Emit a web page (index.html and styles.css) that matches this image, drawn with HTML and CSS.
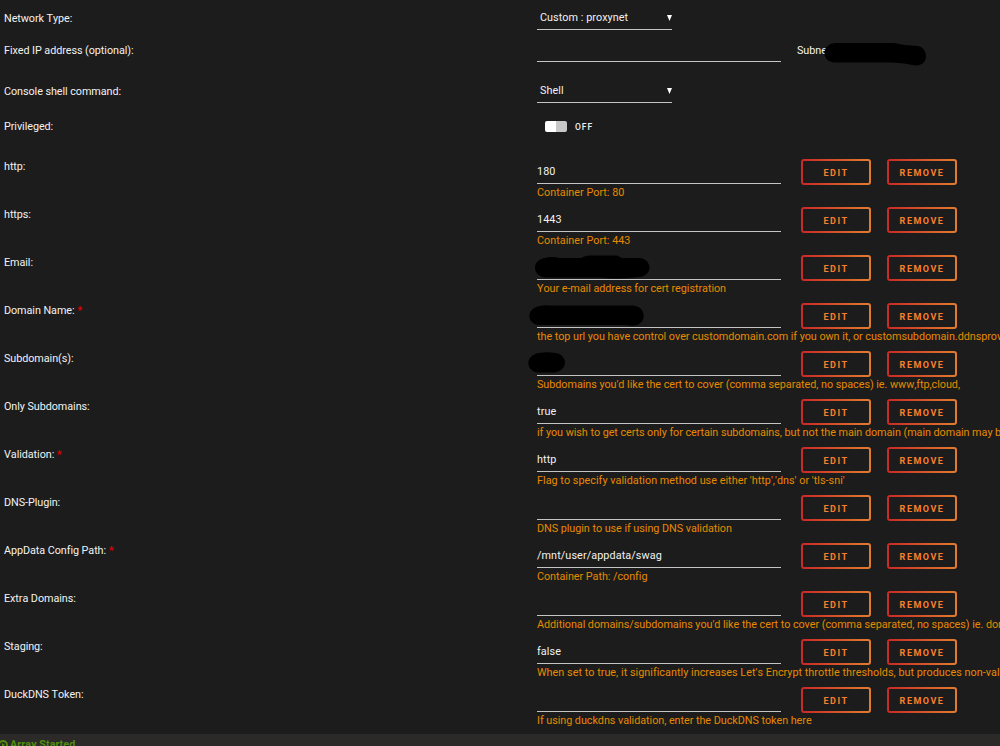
FILE: index.html
```html
<!DOCTYPE html>
<html lang="en">

<head>
  <meta charset="UTF-8">
  <meta name="viewport" content="width=device-width, initial-scale=1.0">
  <title>Update Container</title>
  <link rel="stylesheet" href="styles.css">
</head>

<body>
  <main class="settings">
    <div class="row row-network">
      <div class="label">Network Type:</div>
      <div class="select"><span>Custom : proxynet</span><svg class="arrow" viewBox="0 0 5 6"><path d="M0 0h5L2.5 6z" /></svg></div>
    </div>
    <div class="row row-ip">
      <div class="label">Fixed IP address (optional):</div>
      <div class="input"></div>
      <div class="subnet">Subnet:
        <svg class="mark mark-subnet" viewBox="0 0 104 24"><path d="M11 1H70Q82 4 94 4C105 6 105 24 92 23.500Q80 21 68 20.500H11C-3 20-3 2 11 1z" /></svg>
      </div>
    </div>
    <div class="row row-console">
      <div class="label">Console shell command:</div>
      <div class="select"><span>Shell</span><svg class="arrow" viewBox="0 0 5 6"><path d="M0 0h5L2.5 6z" /></svg></div>
    </div>
    <div class="row row-privileged">
      <div class="label">Privileged:</div>
      <div class="toggle"><span class="switch"></span><span class="off">OFF</span></div>
    </div>

    <div class="row param">
      <div class="label">http:</div>
      <div class="input">180</div>
      <div class="buttons"><button>Edit</button><button>Remove</button></div>
      <div class="help wide"><span>Container Port: 80</span></div>
    </div>
    <div class="row param">
      <div class="label">https:</div>
      <div class="input">1443</div>
      <div class="buttons"><button>Edit</button><button>Remove</button></div>
      <div class="help wide"><span>Container Port: 443</span></div>
    </div>
    <div class="row param">
      <div class="label">Email:</div>
      <div class="input">
        <svg class="mark mark-email" viewBox="0 0 115 24"><path d="M10 3Q17 1 24 3H46Q51 0 55 .5H82L87 3H104C118 4 118 21 104 22Q85 24.500 65 22.500H11C-3 22-4 5 10 3z" /></svg>
      </div>
      <div class="buttons"><button>Edit</button><button>Remove</button></div>
      <div class="help"><span>Your e-mail address for cert registration</span></div>
    </div>
    <div class="row param">
      <div class="label">Domain Name: <b>*</b></div>
      <div class="input">
        <svg class="mark mark-domain" viewBox="0 0 115 21"><path d="M11 1Q16-.2 20 .5H104C118 2 118 18 106 20.500Q102 21 98 20H10C-3 19-3 3 11 1z" /></svg>
      </div>
      <div class="buttons"><button>Edit</button><button>Remove</button></div>
      <div class="help"><span>the top url you have control over customdomain.com if you own it, or customsubdomain.ddnsprov</span></div>
    </div>
    <div class="row param">
      <div class="label">Subdomain(s):</div>
      <div class="input">
        <svg class="mark mark-subdomain" viewBox="0 0 37 21"><path d="M11 1Q18-.3 26 .7C40 2 41 18 27 20.500H10C-3 19-3 3 11 1z" /></svg>
      </div>
      <div class="buttons"><button>Edit</button><button>Remove</button></div>
      <div class="help"><span>Subdomains you'd like the cert to cover (comma separated, no spaces) ie. www,ftp,cloud,</span></div>
    </div>
    <div class="row param">
      <div class="label">Only Subdomains:</div>
      <div class="input">true</div>
      <div class="buttons"><button>Edit</button><button>Remove</button></div>
      <div class="help"><span>if you wish to get certs only for certain subdomains, but not the main domain (main domain may b</span></div>
    </div>
    <div class="row param">
      <div class="label">Validation: <b>*</b></div>
      <div class="input">http</div>
      <div class="buttons"><button>Edit</button><button>Remove</button></div>
      <div class="help wide"><span>Flag to specify validation method use either 'http','dns' or 'tls-sni'</span></div>
    </div>
    <div class="row param">
      <div class="label">DNS-Plugin:</div>
      <div class="input"></div>
      <div class="buttons"><button>Edit</button><button>Remove</button></div>
      <div class="help"><span>DNS plugin to use if using DNS validation</span></div>
    </div>
    <div class="row param">
      <div class="label">AppData Config Path: <b>*</b></div>
      <div class="input">/mnt/user/appdata/swag</div>
      <div class="buttons"><button>Edit</button><button>Remove</button></div>
      <div class="help"><span>Container Path: /config</span></div>
    </div>
    <div class="row param">
      <div class="label">Extra Domains:</div>
      <div class="input"></div>
      <div class="buttons"><button>Edit</button><button>Remove</button></div>
      <div class="help"><span>Additional domains/subdomains you'd like the cert to cover (comma separated, no spaces) ie. dor</span></div>
    </div>
    <div class="row param">
      <div class="label">Staging:</div>
      <div class="input">false</div>
      <div class="buttons"><button>Edit</button><button>Remove</button></div>
      <div class="help wide"><span>When set to true, it significantly increases Let's Encrypt throttle thresholds, but produces non-val</span></div>
    </div>
    <div class="row param">
      <div class="label">DuckDNS Token:</div>
      <div class="input"></div>
      <div class="buttons"><button>Edit</button><button>Remove</button></div>
      <div class="help"><span>If using duckdns validation, enter the DuckDNS token here</span></div>
    </div>
  </main>

  <footer>
    <svg class="play" viewBox="0 0 10 10"><circle cx="5" cy="5" r="4" /><path d="M4 3l3 2-3 2z" /></svg>
    <span>Array Started</span>
  </footer>
</body>

</html>
```

FILE: styles.css
```css
body {
  margin: 0;
  height: 746px;
  overflow: hidden;
  background-color: #1c1c1c;
  color: #f2f2f2;
  font-family: Roboto, "Liberation Sans", sans-serif;
  font-size: 10.8px;
  font-kerning: none;
  letter-spacing: -0.06px;
  line-height: 14px;
}

.row {
  display: grid;
  grid-template-columns: 533px 244px 1fr;
  box-sizing: border-box;
  padding-left: 4px;
  white-space: nowrap;
}

.label b {
  color: #e00000;
  font-weight: bold;
}

.input,
.select {
  position: relative;
  box-sizing: border-box;
  border-bottom: 1px solid #c4c4c4;
}

.select {
  display: flex;
  justify-content: space-between;
  width: 135px;
  padding: 0 0 0 3px;
  letter-spacing: 0.05px;
}

.arrow {
  width: 5px;
  height: 6px;
  margin-top: 4px;
  fill: #fff;
}

.row-network {
  height: 30px;
}

.row-network .label {
  padding-top: 12px;
}

.row-network .select {
  padding-top: 11px;
}

.row-ip {
  height: 32px;
}

.row-ip .label,
.subnet {
  padding-top: 14px;
}

.subnet {
  position: relative;
  padding-left: 16px;
}

.row-console {
  height: 41px;
}

.row-console .label {
  padding-top: 23px;
}

.row-console .select {
  padding-top: 22px;
}

.row-privileged {
  height: 55px;
}

.row-privileged .label {
  padding-top: 17px;
}

.toggle {
  display: flex;
  gap: 8px;
  padding: 17px 0 0 8px;
}

.switch {
  width: 22px;
  height: 11px;
  margin-top: 1px;
  border-radius: 2px;
  background: linear-gradient(to right, #fff 11px, #c8c8c8 11px);
}

.off {
  font-size: 8.5px;
  font-weight: 500;
  letter-spacing: 1px;
}

.param {
  grid-template-rows: 26px 22px;
}

.param .label {
  padding-top: 2px;
}

.param .input {
  padding-top: 7px;
  letter-spacing: 0.1px;
}

.buttons {
  display: flex;
  gap: 16px;
  padding: 1px 0 0 20px;
}

button {
  box-sizing: border-box;
  width: 70px;
  height: 26px;
  padding: 1px 0 0;
  border: 2px solid transparent;
  border-radius: 3px;
  background: linear-gradient(#1c1c1c, #1c1c1c) padding-box, linear-gradient(to right, #c92927, #e27d2d) border-box;
  color: #f9802c;
  font-family: inherit;
  font-size: 9px;
  font-weight: bold;
  letter-spacing: 1.5px;
  text-transform: uppercase;
}

.help {
  grid-column: 2 / 4;
  padding-top: 2px;
  color: #e68a00;
  letter-spacing: -0.04px;
}

.help.wide {
  letter-spacing: 0.03px;
}

/* scribbles over the private values */
.mark {
  position: absolute;
  fill: #000;
}

.mark-subnet {
  left: 43px;
  top: 12px;
  width: 104px;
  height: 24px;
}

.mark-email {
  left: -2px;
  top: 1px;
  width: 115px;
  height: 24px;
}

.mark-domain {
  left: -8px;
  top: 3px;
  width: 115px;
  height: 21px;
}

.mark-subdomain {
  left: -9px;
  top: 2px;
  width: 37px;
  height: 21px;
}

footer {
  display: flex;
  gap: 2px;
  height: 12px;
  overflow: hidden;
  background-color: #2b2a29;
  color: #4f8a10;
  font-weight: bold;
  letter-spacing: 0.05px;
}

footer span {
  padding-top: 4px;
}

.play {
  flex: none;
  width: 10px;
  height: 10px;
  margin: 6px 0 0 -2px;
  fill: #4f8a10;
}

.play circle {
  fill: none;
  stroke: #4f8a10;
  stroke-width: 2;
}
```
